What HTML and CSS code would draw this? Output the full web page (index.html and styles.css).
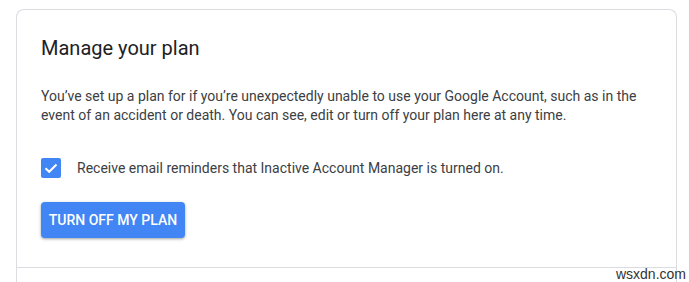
FILE: index.html
```html
<!DOCTYPE html>
<html lang="en">
<head>
<meta charset="utf-8">
<title>Manage your plan</title>
<link rel="stylesheet" href="styles.css">
</head>
<body>
<div class="card">
  <section class="plan">
    <h2 class="title">Manage your plan</h2>
    <p class="desc">You’ve set up a plan for if you’re unexpectedly unable to use your Google Account, such as in the event of an accident or death. You can see, edit or turn off your plan here at any time.</p>
    <label class="check-row">
      <span class="checkbox">
        <svg viewBox="0 0 20 20" width="20" height="20"><path d="M4.5 10.2 L8.2 13.8 L15.5 6.5" fill="none" stroke="#fff" stroke-width="2"/></svg>
      </span>
      <span class="check-label">Receive email reminders that Inactive Account Manager is turned on.</span>
    </label>
    <button class="btn">TURN OFF MY PLAN</button>
  </section>
  <section class="next"></section>
</div>
<div class="watermark">wsxdn.com</div>
</body>
</html>
```
FILE: styles.css
```css
html, body {
  margin: 0;
  padding: 0;
  background: #fff;
  height: 100%;
  overflow: hidden;
}
body {
  font-family: Roboto, "Liberation Sans", Arial, sans-serif;
  position: relative;
}
.card {
  margin: 9px 12px 0 16px;
  border: 1px solid #dadce0;
  border-bottom: none;
  border-radius: 8px 8px 0 0;
  height: 272px;
}
.plan {
  padding: 24px 24px 0 24px;
  height: 258px;
  box-sizing: border-box;
  border-bottom: 1px solid #dadce0;
}
.title {
  margin: 0;
  font-size: 20px;
  font-weight: 400;
  line-height: 28px;
  color: #202124;
}
.desc {
  margin: 25px 0 0 0;
  font-size: 14px;
  line-height: 19px;
  color: #3c4043;
  max-width: 610px;
}
.check-row {
  display: flex;
  align-items: center;
  margin-top: 33px;
}
.checkbox {
  width: 20px;
  height: 20px;
  background: #4285f4;
  border-radius: 2px;
  display: flex;
  align-items: center;
  justify-content: center;
}
.check-label {
  margin-left: 16px;
  font-size: 14px;
  color: #3c4043;
}
.btn {
  display: block;
  margin-top: 24px;
  width: 144px;
  height: 36px;
  border: none;
  border-radius: 4px;
  background: #4285f4;
  color: #fff;
  font-family: Roboto, "Liberation Sans", Arial, sans-serif;
  font-size: 14px;
  font-weight: 500;
  padding: 0;
  box-shadow: 0 1px 2px rgba(60,64,67,.3), 0 1px 3px 1px rgba(60,64,67,.15);
}
.watermark {
  position: absolute;
  right: 3px;
  bottom: 0;
  font-family: "Liberation Sans", Arial, sans-serif;
  font-size: 14px;
  color: #333;
  line-height: 16px;
}
```
